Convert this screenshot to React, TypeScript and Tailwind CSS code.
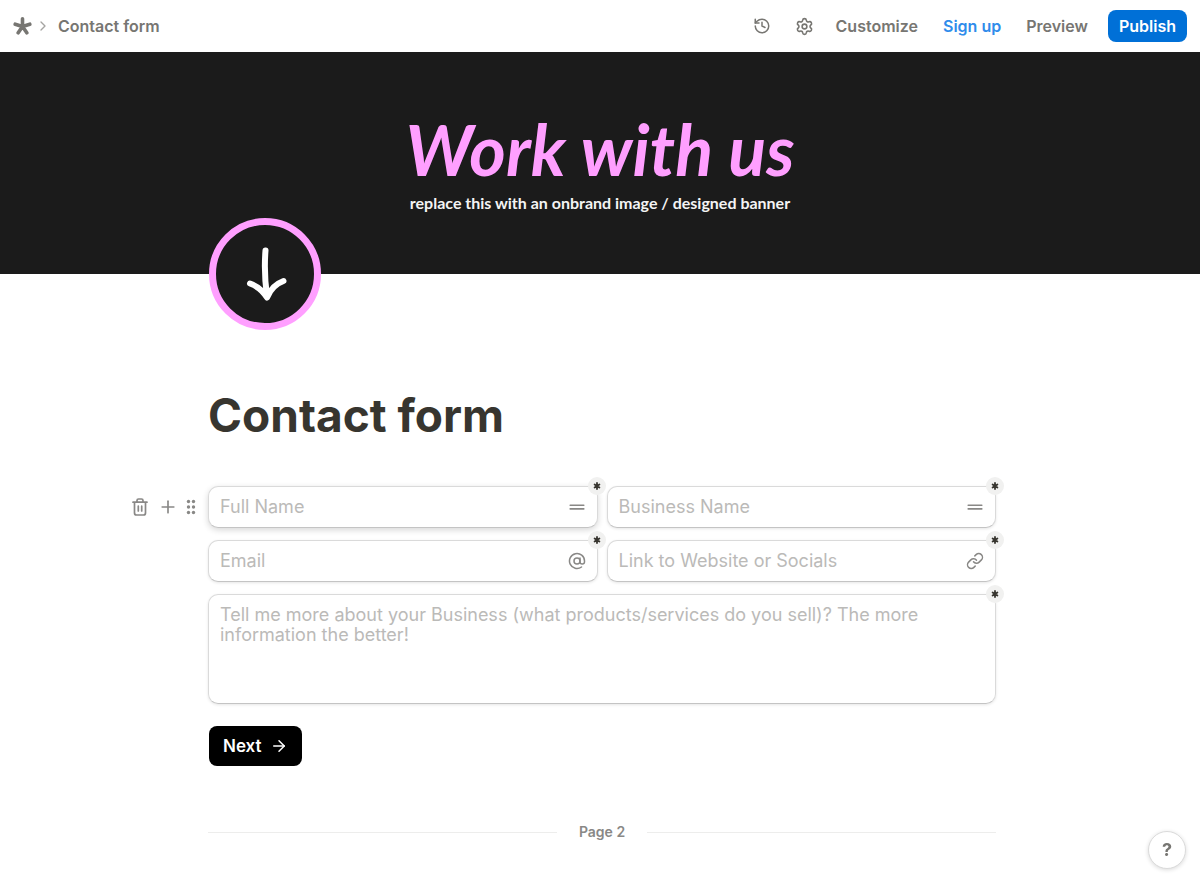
import React from "react";
import { ArrowRight, AtSign, ChevronRight, History, Link as LinkIcon, Plus, Settings } from "lucide-react";

interface FieldProps {
  id: string;
  label: string;
  type?: string;
  icon: React.ReactNode;
  active?: boolean;
}

const Asterisk = () => (
  <svg width="20" height="20" viewBox="0 0 20 20" fill="none" stroke="#777672" strokeWidth="3.6" strokeLinecap="round">
    <path d="M10.5 10.5V2.8M10.5 10.5L3.2 8.2M10.5 10.5L17.8 8.2M10.5 10.5L6.2 16.8M10.5 10.5L14.8 16.8" />
  </svg>
);

const TrashIcon = () => (
  <svg width="16" height="18" viewBox="0 0 16 18" fill="none" stroke="currentColor" strokeWidth="1.7" strokeLinecap="round" strokeLinejoin="round">
    <path d="M1 4.2H15M2.5 4.2V15Q2.5 17 4.5 17H11.5Q13.5 17 13.5 15V4.2M5 4V2.5Q5 1 6.5 1H9.5Q11 1 11 2.5V4M6.3 8.2V13M9.7 8.2V13" />
  </svg>
);

const DragIcon = () => (
  <svg width="10" height="16" viewBox="0 0 10 16" fill="currentColor">
    {[2.5, 8, 13.5].map((y) => (
      <React.Fragment key={y}>
        <circle cx="2.5" cy={y} r="1.7" />
        <circle cx="7.5" cy={y} r="1.7" />
      </React.Fragment>
    ))}
  </svg>
);

const ShortTextIcon = () => (
  <svg width="18" height="18" viewBox="0 0 18 18" fill="none" stroke="currentColor" strokeWidth="1.6" strokeLinecap="round">
    <path d="M2.2 7.3H15.8M2.2 10.9H15.8" />
  </svg>
);

const RequiredBadge = () => (
  <span className="absolute -top-[9px] -right-2 flex size-[18px] items-center justify-center rounded-full bg-[#f1f1f0]">
    <svg width="8" height="8" viewBox="0 0 8 8" stroke="#37352f" strokeWidth="1.8" strokeLinecap="round">
      <path d="M4 1V7M1.6 2.4L6.4 5.6M1.6 5.6L6.4 2.4" />
    </svg>
  </span>
);

const Field = ({ id, label, type = "text", icon, active }: FieldProps) => (
  <div className="relative">
    <input
      id={id}
      type={type}
      aria-label={label}
      placeholder={label}
      className={`block h-[42px] w-full rounded-[10px] border border-[#dadada] border-b-[#c4c4c4] bg-white pr-10 pb-0.5 pl-[11px] text-lg text-[#37352f] placeholder:text-[#bbbab8] outline-none ${
        active ? "shadow-[0_2px_6px_rgba(0,0,0,0.16)]" : "shadow-[0_1px_3px_rgba(0,0,0,0.1)]"
      }`}
    />
    <span className="pointer-events-none absolute inset-y-0 right-3 flex items-center text-[#898886]">{icon}</span>
    <RequiredBadge />
  </div>
);

const Header = () => (
  <header className="flex h-[52px] items-center justify-between pr-[13px] pl-3 text-base font-semibold text-[#777672]">
    <nav className="flex items-center">
      <a href="#" aria-label="Home">
        <Asterisk />
      </a>
      <ChevronRight size={16} className="mx-[3px] text-[#a5a4a1]" />
      <a href="#" className="ml-1">
        Contact form
      </a>
    </nav>
    <div className="flex items-center">
      <button aria-label="History" className="mr-6">
        <History size={18} />
      </button>
      <button aria-label="Settings" className="mr-[22px]">
        <Settings size={19} />
      </button>
      <button className="mr-[25px]">Customize</button>
      <a href="#" className="mr-[25px] text-[#2f8ceb]">
        Sign up
      </a>
      <button className="mr-5">Preview</button>
      <button className="h-8 rounded-lg bg-[#0070d7] px-[11px] text-white">Publish</button>
    </div>
  </header>
);

const Banner = () => (
  <div className="flex h-[222px] flex-col items-center bg-[#1b1b1b] pt-[55px]">
    <p className="font-['Lato',cursive] text-[70px] leading-[84px] font-bold text-[#ff9fff] italic">Work with us</p>
    <p className="mt-0.5 font-['Lato',sans-serif] text-base leading-5 font-bold text-[#f4f4f4]">
      replace this with an onbrand image / designed banner
    </p>
  </div>
);

const App: React.FC = () => {
  return (
    <div className="min-h-screen bg-white font-['Inter',sans-serif]">
      <Header />
      <Banner />
      <main className="pr-4 pl-5">
        <div className="mx-auto max-w-[788px]">
          <div className="relative -mt-14 ml-px flex size-28 items-center justify-center rounded-full border-[7px] border-[#ff9fff] bg-[#1b1b1b]">
            <svg width="44" height="56" viewBox="0 0 44 56" fill="none" stroke="#fff" strokeWidth="6" strokeLinecap="round" strokeLinejoin="round">
              <path d="M22.5 4.5C21.5 17 22 36 24 50.5M7 37.5C14 40 20 45 24 51.5C27.5 43 33.5 37.5 40.5 35" />
            </svg>
          </div>

          <h1 className="mt-[55px] text-[46px] leading-[60px] font-bold text-[#37352f]">Contact form</h1>

          <form className="mt-[41px]">
            <div className="relative grid grid-cols-2 gap-x-[9px] gap-y-3">
              <div className="absolute top-0 right-full mr-3 flex h-[42px] items-center text-[#898886]">
                <button type="button" aria-label="Delete" className="mr-2.5">
                  <TrashIcon />
                </button>
                <button type="button" aria-label="Add" className="mr-2">
                  <Plus size={20} strokeWidth={2} />
                </button>
                <button type="button" aria-label="Move">
                  <DragIcon />
                </button>
              </div>
              <Field id="name" label="Full Name" icon={<ShortTextIcon />} active />
              <Field id="business" label="Business Name" icon={<ShortTextIcon />} />
              <Field id="email" label="Email" type="email" icon={<AtSign size={18} strokeWidth={2} />} />
              <Field id="link" label="Link to Website or Socials" type="url" icon={<LinkIcon size={18} strokeWidth={2} />} />
              <div className="relative col-span-2">
                <textarea
                  id="details"
                  aria-label="Business details"
                  placeholder="Tell me more about your Business (what products/services do you sell)? The more information the better!"
                  className="block h-[110px] w-full resize-none rounded-[10px] border border-[#dadada] border-b-[#c4c4c4] px-[11px] py-2.5 text-lg leading-5 text-[#37352f] placeholder:text-[#bbbab8] shadow-[0_1px_3px_rgba(0,0,0,0.1)] outline-none"
                />
                <RequiredBadge />
              </div>
            </div>
            <button type="button" className="mt-[22px] ml-px flex h-10 items-center gap-2 rounded-lg bg-black px-[14px] text-[17px] leading-6 font-semibold text-white">
              Next
              <ArrowRight size={18} strokeWidth={2} />
            </button>
          </form>

          <div className="mt-14 flex items-center gap-[22px] text-sm font-semibold text-[#898886]">
            <span className="h-px flex-1 bg-[#ededec]" />
            Page 2
            <span className="h-px flex-1 bg-[#ededec]" />
          </div>
        </div>
      </main>
      <button className="fixed right-[14px] bottom-2 size-[38px] rounded-full border border-[#dadada] bg-white text-lg font-bold text-[#777672] shadow-[0_1px_4px_rgba(0,0,0,0.15)]">
        ?
      </button>
    </div>
  );
};

export default App;
